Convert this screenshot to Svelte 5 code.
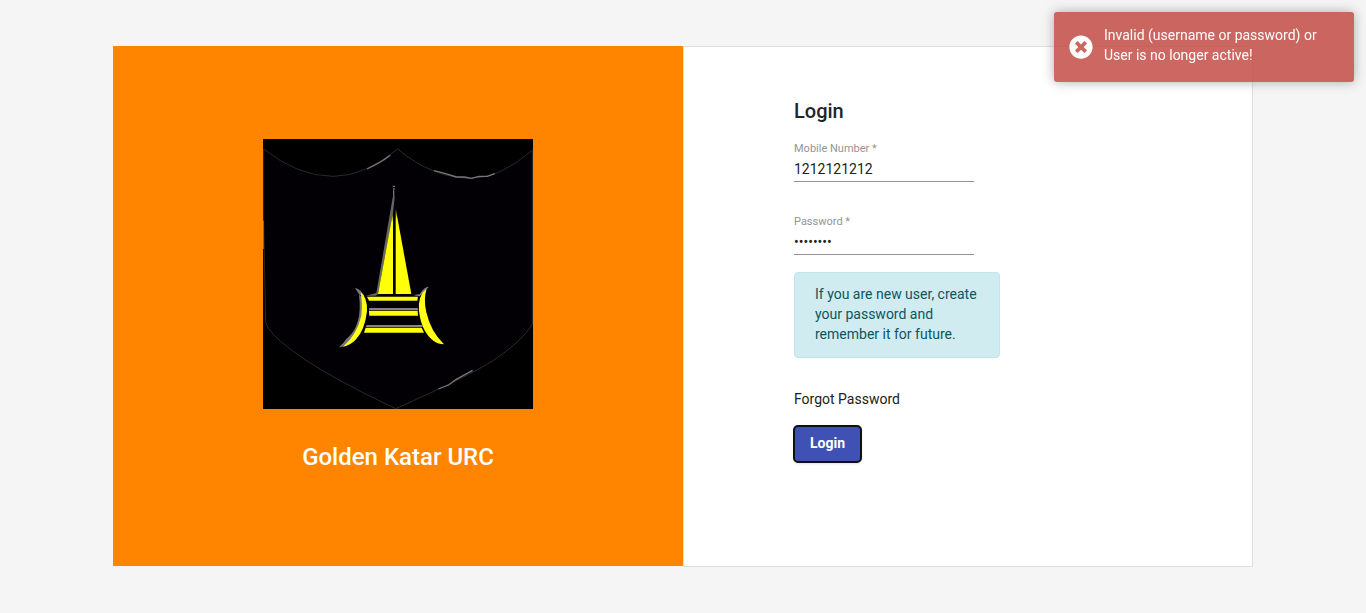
<script>
  let mobile = $state('1212121212');
  let password = $state('password');
</script>

<div class="page">
  <main class="panel">
    <section class="brand">
      <svg class="logo" viewBox="0 0 810 810" role="img" aria-label="Golden Katar">
        <defs>
          <linearGradient id="blade" x1="0" y1="0" x2="0" y2="1">
            <stop offset="0" stop-color="#555500" />
            <stop offset="0.12" stop-color="#ffff08" />
          </linearGradient>
        </defs>
        <rect width="810" height="810" fill="#000" />
        <path d="M2 30Q105 112 210 112Q305 112 404 30Q510 118 625 118Q710 118 808 34V555Q780 605 690 665Q620 710 398 809Q180 705 85 633Q15 580 8 550L2 250Z" fill="#020004" stroke="#292a29" stroke-width="3" />
        <g fill="none" stroke="#777" stroke-width="4">
          <path d="M312 90Q352 72 382 49" />
          <path d="M513 95L548 104L580 114L604 114L625 118L648 112L673 112L695 104" />
          <path d="M526 750L557 738L580 721L607 706L629 694" />
        </g>
        <path d="M1 245V330" stroke="#777" stroke-width="3" />
        <path d="M389 142H396M390 150H395M392 154V175" stroke="#777" stroke-width="4" />
        <path d="M391 165L395 175L390 222L345 466L338 470H308L340 462Z" fill="#666" />
        <path d="M390 220V465H345Z" fill="url(#blade)" />
        <path d="M398 208L445 465H398Z" fill="url(#blade)" />
        <path d="M276 447Q293 449 304 472L289 467Z" fill="#777" />
        <path d="M450 468L470 466Q483 444 498 443L485 456L470 472Z" fill="#888" />
        <path d="M291 465Q305 545 264 591Q248 614 228 626Q280 604 301 550Z" fill="#999" />
        <path d="M288 467Q300 560 250 600Q242 612 228 625L245 622Q308 585 298 475Z" fill="#777" />
        <path d="M293 460Q313 474 312 516Q306 573 278 602Q262 619 240 623Q282 587 295 530Q299 493 293 460Z" fill="#ffff16" />
        <path d="M491 449Q464 468 468 516Q475 578 512 606Q526 616 543 616Q503 578 490 520Q481 480 491 449Z" fill="#ffff16" />
        <path d="M312 473H465L463 485H318Z" fill="#ffff08" />
        <path d="M319 507H464L466 513H318Z" fill="#888090" />
        <path d="M318 515H464L465 530H319Z" fill="#ffff08" />
        <path d="M312 558H477L479 564H307Z" fill="#888090" />
        <path d="M308 566H476L483 581H303Z" fill="#ffff08" />
      </svg>
      <h1>Golden Katar URC</h1>
    </section>

    <section class="entry">
      <form onsubmit={(event) => event.preventDefault()}>
        <h2>Login</h2>
        <div class="field">
          <label for="mobile">Mobile Number *</label>
          <input id="mobile" type="text" bind:value={mobile} />
        </div>
        <div class="field">
          <label for="password">Password *</label>
          <input id="password" type="password" bind:value={password} />
        </div>
        <p class="hint">If you are new user, create your password and remember it for future.</p>
        <a class="forgot" href="#forgot">Forgot Password</a>
        <button type="submit">Login</button>
      </form>
    </section>
  </main>

  <div class="toast" role="alert">
    <svg viewBox="0 0 512 512" aria-hidden="true">
      <path fill="#fff" d="M256 8C119 8 8 119 8 256s111 248 248 248 248-111 248-248S393 8 256 8zm121.600 313.100c4.700 4.700 4.700 12.300 0 17L338 377.600c-4.700 4.700-12.300 4.700-17 0L256 312l-65.100 65.600c-4.700 4.700-12.300 4.700-17 0L134.400 338c-4.700-4.700-4.700-12.300 0-17l65.600-65-65.600-65.100c-4.700-4.700-4.700-12.300 0-17l39.600-39.600c4.700-4.700 12.300-4.700 17 0l65 65.700 65.100-65.600c4.700-4.700 12.300-4.700 17 0l39.600 39.600c4.700 4.700 4.700 12.300 0 17L312 256l65.600 65.100z" />
    </svg>
    <span>Invalid (username or password) or User is no longer active!</span>
  </div>
</div>

<style>
  :global(body) {
    margin: 0;
    background: #f5f5f5;
  }

  .page {
    box-sizing: border-box;
    min-height: 100vh;
    padding: 46px 16px;
    font: 14px/20px Roboto, sans-serif;
    color: #212529;
  }

  .page * {
    box-sizing: border-box;
  }

  .panel {
    display: grid;
    grid-template-columns: 1fr 1fr;
    max-width: 1140px;
    min-height: 521px;
    margin: 0 auto;
  }

  .brand {
    display: flex;
    flex-direction: column;
    align-items: center;
    margin-bottom: 1px;
    padding: 93px 20px;
    background: #ff8500;
  }

  .logo {
    width: 270px;
    max-width: 100%;
  }

  h1 {
    margin: 32px 0 0;
    font-size: 24px;
    line-height: 32px;
    font-weight: 500;
    color: #fff;
  }

  .entry {
    padding: 48px 110px;
    background: #fff;
    border: 1px solid #dedede;
  }

  form {
    display: flex;
    flex-direction: column;
    align-items: flex-start;
    max-width: 206px;
  }

  h2 {
    margin: 0 0 16px;
    font-size: 20px;
    line-height: 32px;
    font-weight: 500;
  }

  .field {
    display: flex;
    flex-direction: column;
    width: 180px;
    margin-bottom: 34px;
  }

  .field + .field {
    margin-bottom: 17px;
  }

  label {
    font-size: 11px;
    line-height: 12px;
    color: #949494;
  }

  input {
    width: 100%;
    height: 27px;
    padding: 4px 0 2px;
    border: 0;
    border-bottom: 1px solid #949494;
    border-radius: 0;
    outline: 0;
    background: transparent;
    font: inherit;
    color: #212121;
  }

  .hint {
    margin: 0 0 31px;
    padding: 11px 20px 13px;
    border: 1px solid #bee5eb;
    border-radius: 4px;
    background: #d1ecf1;
    color: #0c5460;
  }

  .forgot {
    margin-bottom: 17px;
    color: #212121;
    text-decoration: none;
  }

  button {
    height: 36px;
    padding: 0 16px 2px;
    border: 0;
    border-radius: 4px;
    outline: 2px solid #101010;
    outline-offset: -1px;
    background: #3f51b5;
    box-shadow: 0 3px 1px -2px #0002, 0 2px 2px #0001, 0 1px 5px #0001;
    font: 700 14px/20px Roboto, sans-serif;
    color: #fff;
  }

  .toast {
    position: fixed;
    top: 12px;
    right: 12px;
    display: flex;
    align-items: center;
    gap: 11px;
    width: 300px;
    padding: 15px;
    border-radius: 3px;
    background: #c1423b;
    box-shadow: 0 0 12px #999;
    color: #fff;
    opacity: 0.8;
  }

  .toast svg {
    flex: none;
    width: 24px;
    height: 24px;
  }

  .toast span {
    padding-bottom: 2px;
    margin-top: -2px;
  }
</style>
